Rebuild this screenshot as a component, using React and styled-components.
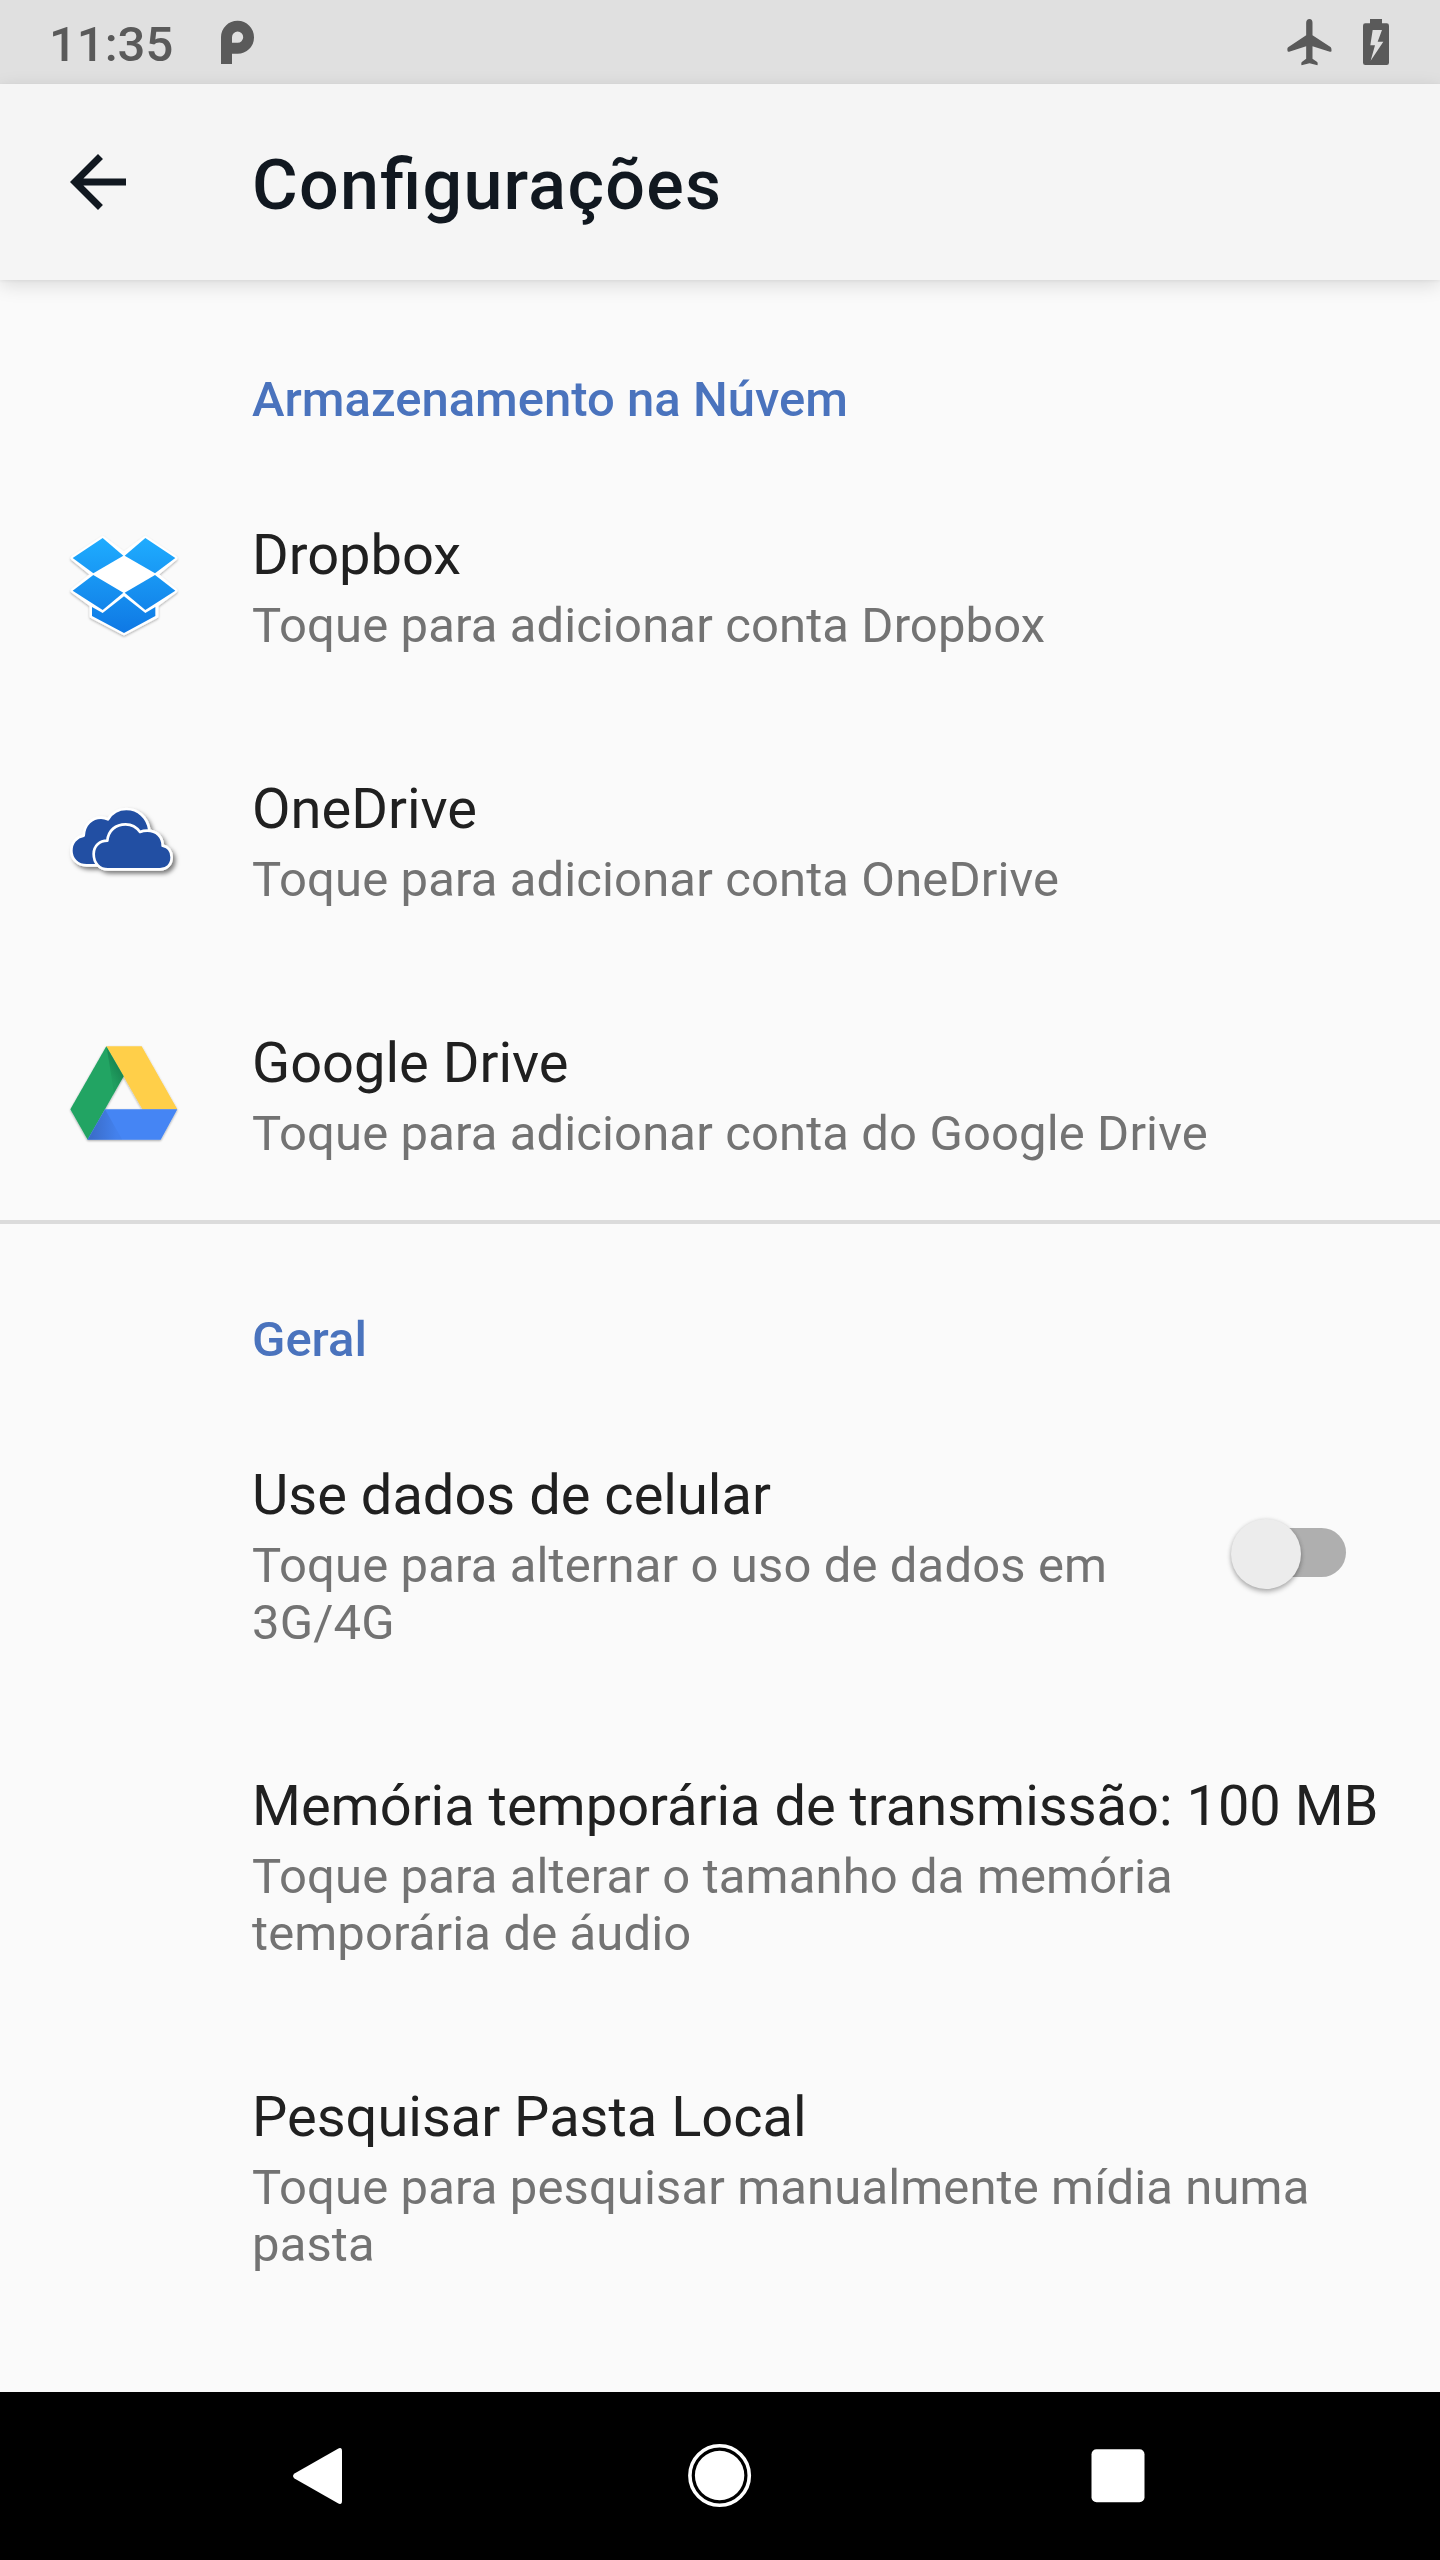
import React from "react";
import styled, { createGlobalStyle } from "styled-components";

const GlobalStyle = createGlobalStyle`
  * { box-sizing: border-box; }
  body {
    margin: 0;
    background: #fafafa;
    font-family: Roboto, "Noto Sans", sans-serif;
    -webkit-font-smoothing: antialiased;
  }
`;

const Screen = styled.div`
  display: flex;
  flex-direction: column;
  width: 1440px;
  height: 2560px;
  overflow: hidden;
  background: #fafafa;
`;

const StatusBar = styled.div`
  flex: none;
  display: flex;
  align-items: center;
  height: 84px;
  padding: 0 49px;
  background: #e0e0e0;
  color: #5a5a5a;
`;

const Clock = styled.span`
  width: 172px;
  padding-top: 5px;
  font-size: 49px;
  line-height: 57px;
  font-weight: 500;
`;

const StatusIcons = styled.div`
  display: flex;
  align-items: center;
  gap: 31px;
  margin-left: auto;
  margin-right: 2px;
`;

const Glyph = styled.svg`
  display: block;
  flex: none;
  fill: currentColor;
`;

const AppBar = styled.header`
  flex: none;
  display: flex;
  align-items: center;
  height: 196px;
  background: #f5f5f5;
  color: #111820;
  box-shadow: 0 5px 18px rgba(0, 0, 0, 0.13), 0 1px 3px rgba(0, 0, 0, 0.05);
`;

const BackButton = styled.button`
  display: flex;
  width: 252px;
  padding: 0 0 0 56px;
  border: 0;
  background: none;
  color: inherit;
`;

const Title = styled.h1`
  margin: 0;
  padding-top: 5px;
  font-size: 70px;
  line-height: 82px;
  font-weight: 500;
  letter-spacing: 1.28px;
  font-feature-settings: "liga" 1;
  white-space: nowrap;
`;

const Content = styled.main`
  flex: 1;
  overflow: hidden;
`;

const Section = styled.section`
  border-top: ${(p) => (p.$divided ? "4px solid #dbdbdb" : "0")};
`;

const Category = styled.h2`
  height: ${(p) => (p.$divided ? 174 : 178)}px;
  margin: 0;
  padding: ${(p) => (p.$divided ? 87 : 91)}px 0 0 252px;
  color: #4a73bd;
  font-size: 49px;
  line-height: 57px;
  font-weight: 500;
`;

const Row = styled.div`
  display: flex;
  align-items: stretch;
  padding-right: 56px;
`;

const IconCell = styled.div`
  flex: none;
  display: flex;
  align-items: center;
  width: 252px;
  padding-left: 50px;
`;

const RowText = styled.div`
  flex: 1;
  min-width: 0;
  padding: 64px 0 58px;
`;

const RowTitle = styled.div`
  color: #202020;
  font-size: 56px;
  line-height: 66px;
  white-space: nowrap;
`;

const Summary = styled.div`
  margin-top: 9px;
  color: #737373;
  font-size: 49px;
  line-height: 57px;
  letter-spacing: 0.12px;
`;

const SwitchCell = styled.div`
  flex: none;
  display: flex;
  align-items: center;
  padding: 0 38px 2px 56px;
`;

const SwitchTrack = styled.div`
  display: flex;
  align-items: center;
  width: 98px;
  height: 49px;
  border-radius: 25px;
  background: #afafaf;
`;

const SwitchThumb = styled.div`
  flex: none;
  width: 70px;
  height: 70px;
  margin: 2px 0 0 -17px;
  border-radius: 50%;
  background: #ececec;
  box-shadow: 0 3px 5px rgba(0, 0, 0, 0.28), 0 0 4px rgba(0, 0, 0, 0.1);
`;

const NavBar = styled.nav`
  flex: none;
  display: flex;
  align-items: center;
  justify-content: space-between;
  height: 168px;
  padding: 0 282px 0 282px;
  background: #000;
  color: #fff;
`;

function DropboxLogo() {
  return (
    <Glyph width="150" height="150" viewBox="0 0 450 450">
      <defs>
        <linearGradient id="dbx" gradientUnits="userSpaceOnUse" x1="0" y1="80" x2="0" y2="370">
          <stop offset="0" stopColor="#1fadff" />
          <stop offset="1" stopColor="#0f78e4" />
        </linearGradient>
        <filter id="dbxShadow" x="-10%" y="-10%" width="120%" height="125%">
          <feDropShadow dx="0" dy="4" stdDeviation="3" floodColor="#000" floodOpacity="0.3" />
        </filter>
      </defs>
      <path
        filter="url(#dbxShadow)"
        fill="#fff"
        stroke="#fff"
        strokeWidth="13"
        strokeLinejoin="round"
        d="M158 84 222 132 286 84 376 144 318 193 376 242 319 284V318L222 369 125 318V284L68 242 128 193 68 144Z"
      />
      <g fill="url(#dbx)">
        <path d="M158 84 220 137 130 190 68 144Z" />
        <path d="M286 84 376 144 315 190 224 137Z" />
        <path d="M130 195 220 248 158 300 68 242Z" />
        <path d="M315 195 376 242 286 300 224 248Z" />
        <path d="M222 259 286 309 316 291V318L222 369 126 318V291L158 309Z" />
      </g>
    </Glyph>
  );
}

function OneDriveLogo() {
  return (
    <Glyph width="150" height="150" viewBox="0 -48 450 450">
      <defs>
        <filter id="odShadow" x="-10%" y="-15%" width="130%" height="140%">
          <feDropShadow dx="8" dy="9" stdDeviation="6" floodColor="#000" floodOpacity="0.5" />
        </filter>
      </defs>
      <g filter="url(#odShadow)" fill="#2350a3" stroke="#fff" strokeWidth="8" strokeLinejoin="round">
        <path d="M110 256C83 256 64 237 64 212 64 188 79 171 101 167 103 133 126 113 153 113 162 113 168 115 174 118 186 98 205 87 229 87 265 87 292 112 298 149L290 256Z" />
        <path d="M174 268C148 268 131 249 131 222 131 198 149 182 172 182 175 151 197 133 227 133 246 133 260 142 270 156 277 153 284 152 292 152 319 152 338 170 338 197 354 200 365 213 365 232 365 254 350 268 330 268Z" />
      </g>
    </Glyph>
  );
}

function DriveLogo() {
  return (
    <Glyph width="150" height="150" viewBox="0 -6 450 450">
      <defs>
        <linearGradient id="gdShadeA" gradientUnits="userSpaceOnUse" x1="180" y1="165" x2="210" y2="148">
          <stop offset="0" stopColor="#0b5c38" stopOpacity="0.1" />
          <stop offset="1" stopColor="#0b5c38" stopOpacity="0.4" />
        </linearGradient>
        <linearGradient id="gdShadeB" gradientUnits="userSpaceOnUse" x1="125" y1="330" x2="200" y2="330">
          <stop offset="0" stopColor="#27417e" stopOpacity="0.35" />
          <stop offset="1" stopColor="#27417e" stopOpacity="0.06" />
        </linearGradient>
        <filter id="gdShadow" x="-10%" y="-10%" width="120%" height="120%">
          <feDropShadow dx="0" dy="3" stdDeviation="2.5" floodColor="#000" floodOpacity="0.35" />
        </filter>
      </defs>
      <g filter="url(#gdShadow)">
        <path fill="#ffcf4a" d="M169 79H275L382 268H277Z" />
        <path fill="#20a463" d="M169 79 221 169 113 359 61 268Z" />
        <path fill="#4485f4" d="M165 268H382L332 359H112Z" />
      </g>
      <path fill="url(#gdShadeA)" d="M170 82 221 169 192 220Z" />
      <path fill="url(#gdShadeB)" d="M165 268 217 359H113Z" />
    </Glyph>
  );
}

const cloudAccounts = [
  { title: "Dropbox", summary: "Toque para adicionar conta Dropbox", Logo: DropboxLogo },
  { title: "OneDrive", summary: "Toque para adicionar conta OneDrive", Logo: OneDriveLogo },
  { title: "Google Drive", summary: "Toque para adicionar conta do Google Drive", Logo: DriveLogo },
];

const generalItems = [
  { title: "Use dados de celular", summary: "Toque para alternar o uso de dados em 3G/4G", toggle: true },
  {
    title: "Memória temporária de transmissão: 100 MB",
    summary: "Toque para alterar o tamanho da memória temporária de áudio",
  },
  { title: "Pesquisar Pasta Local", summary: "Toque para pesquisar manualmente mídia numa pasta" },
];

function Preference({ title, summary, Logo, toggle }) {
  return (
    <Row>
      <IconCell>{Logo && <Logo />}</IconCell>
      <RowText>
        <RowTitle>{title}</RowTitle>
        <Summary>{summary}</Summary>
      </RowText>
      {toggle && (
        <SwitchCell>
          <SwitchTrack>
            <SwitchThumb />
          </SwitchTrack>
        </SwitchCell>
      )}
    </Row>
  );
}

export default function App() {
  return (
    <>
      <GlobalStyle />
      <Screen>
        <StatusBar>
          <Clock>11:35</Clock>
          <Glyph width="33" height="46" viewBox="0 -1.500 33 46">
            <path
              fillRule="evenodd"
              d="M0 43.500V16.500A16.500 16.500 0 1 1 16.500 33.300H11V43.500ZM11 22.300H16.500A5.600 5.600 0 1 0 11 16.700Z"
            />
          </Glyph>
          <StatusIcons>
            <Glyph width="45" height="47" viewBox="143 53 134 141">
              <path d="M210 53C216 53 219 58 219 64V102L273 137C276 139 276 144 276 150Q275 152 271 151L219 135V172L232 181C235 183 235 187 234 192L210 186 186 192C185 187 185 183 188 181L200 172V135L149 151Q144 152 144 148C143 142 144 139 147 137L200 102V64C200 58 204 53 210 53Z" />
            </Glyph>
            <Glyph width="26" height="46" viewBox="369 57 78 138">
              <path
                fillRule="evenodd"
                d="M390 57H426V70H440Q447 70 447 77V188Q447 195 440 195H376Q369 195 369 188V77Q369 70 376 70H390ZM398 90 391 136H405L392 182 430 125H413L426 90Z"
              />
            </Glyph>
          </StatusIcons>
        </StatusBar>
        <AppBar>
          <BackButton aria-label="Voltar">
            <Glyph width="84" height="84" viewBox="0 0 24 24">
              <path d="M20 11H7.830l5.590-5.590L12 4l-8 8 8 8 1.410-1.410L7.830 13H20v-2z" />
            </Glyph>
          </BackButton>
          <Title>Configurações</Title>
        </AppBar>
        <Content>
          <Section>
            <Category>Armazenamento na Núvem</Category>
            {cloudAccounts.map((item) => (
              <Preference key={item.title} {...item} />
            ))}
          </Section>
          <Section $divided>
            <Category $divided>Geral</Category>
            {generalItems.map((item) => (
              <Preference key={item.title} {...item} />
            ))}
          </Section>
        </Content>
        <NavBar>
          <Glyph width="72" height="64" viewBox="0 0 72 64">
            <path d="M12.500 29.500 55.500 4.900Q60 2.500 60 7V57Q60 61.500 55.500 59.100L12.500 34.500Q9.500 32 12.500 29.500Z" />
          </Glyph>
          <Glyph width="64" height="64" viewBox="0 0 64 64">
            <circle cx="31.600" cy="31.500" r="29.700" fill="none" stroke="currentColor" strokeWidth="3.600" />
            <circle cx="31.600" cy="31.500" r="24.700" />
          </Glyph>
          <Glyph width="72" height="64" viewBox="0 0 72 64">
            <rect x="5.500" y="5.300" width="53" height="53" rx="5" />
          </Glyph>
        </NavBar>
      </Screen>
    </>
  );
}
